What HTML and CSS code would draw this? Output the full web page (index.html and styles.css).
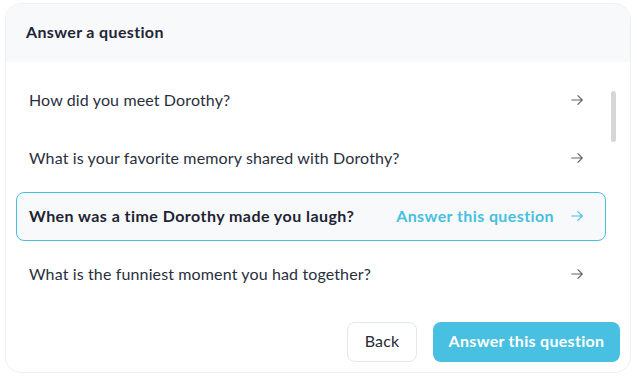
FILE: index.html
```html
<!DOCTYPE html>
<html>
<head>
<meta charset="utf-8">
<link rel="stylesheet" href="styles.css">
</head>
<body>
<div class="card">
  <div class="header">Answer a question</div>
  <div class="content">
    <div class="list">
      <div class="row"><span class="q">How did you meet Dorothy?</span><span class="act"><svg class="arrow" viewBox="0 0 24 24"><path d="M13.5 4.5 21 12l-7.5 7.5M21 12H3"/></svg></span></div>
      <div class="row"><span class="q">What is your favorite memory shared with Dorothy?</span><span class="act"><svg class="arrow" viewBox="0 0 24 24"><path d="M13.5 4.5 21 12l-7.5 7.5M21 12H3"/></svg></span></div>
      <div class="row active"><span class="q">When was a time Dorothy made you laugh?</span><span class="act"><span class="cta">Answer this question</span><svg class="arrow" viewBox="0 0 24 24"><path d="M13.5 4.5 21 12l-7.5 7.5M21 12H3"/></svg></span></div>
      <div class="row"><span class="q">What is the funniest moment you had together?</span><span class="act"><svg class="arrow" viewBox="0 0 24 24"><path d="M13.5 4.5 21 12l-7.5 7.5M21 12H3"/></svg></span></div>
    </div>
    <div class="scrollbar"><div class="thumb"></div></div>
  </div>
  <div class="footer">
    <button class="btn back">Back</button>
    <button class="btn primary">Answer this question</button>
  </div>
</div>
</body>
</html>
```

FILE: styles.css
```css
* { box-sizing: border-box; }
body {
  margin: 0;
  background: #ffffff;
  font-family: "Lato", "Noto Sans", sans-serif;
  color: #252a37;
}
.card {
  margin: 3px 0 0 5px;
  width: 626px;
  height: 370px;
  border: 1px solid #eef0f3;
  border-radius: 16px;
  overflow: hidden;
  display: flex;
  flex-direction: column;
  background: #fff;
}
.header {
  height: 58px;
  flex: none;
  background: #f8f9fb;
  padding: 0 0 4px 20px;
  display: flex;
  align-items: center;
  font-size: 16px;
  font-weight: 700;
  letter-spacing: 0.35px;
  color: #1f2535;
}
.content {
  height: 250px;
  flex: none;
  display: flex;
  overflow: hidden;
}
.list {
  flex: 1;
  padding: 14px 0 0 10px;
  display: flex;
  flex-direction: column;
  gap: 9px;
}
.row {
  flex: none;
  height: 49px;
  display: flex;
  align-items: center;
  justify-content: space-between;
  padding: 0 21px 2px 12px;
  border: 1px solid transparent;
  border-radius: 8px;
  font-size: 16px;
  letter-spacing: 0.13px;
  color: #2a2f3d;
}
.row.active {
  border-color: #48bfe1;
  background: #f7f9fb;
  font-weight: 700;
  letter-spacing: 0.45px;
  color: #1f2433;
}
.act {
  display: flex;
  align-items: center;
  gap: 16px;
}
.cta {
  color: #48bfe1;
  font-weight: 700;
  letter-spacing: 0.4px;
}
.arrow {
  width: 14px;
  height: 14px;
  fill: none;
  stroke: #5f6673;
  stroke-width: 2;
  stroke-linecap: round;
  stroke-linejoin: round;
}
.row.active .arrow { stroke: #48bfe1; }
.scrollbar {
  flex: none;
  width: 24px;
  padding: 29px 0 0 5px;
}
.thumb {
  width: 5px;
  height: 51px;
  border-radius: 3px;
  background: #d6d6d6;
}
.footer {
  flex: 1;
  display: flex;
  justify-content: flex-end;
  align-items: flex-start;
  gap: 16px;
  padding: 10px 10px 0 0;
}
.btn {
  height: 40px;
  border-radius: 8px;
  font-family: inherit;
  font-size: 16px;
  padding: 0 0 3px;
  cursor: pointer;
}
.back {
  width: 70px;
  background: #fff;
  border: 1px solid #e3e7ee;
  color: #252a37;
  letter-spacing: 0.15px;
}
.primary {
  width: 187px;
  background: #48c0e1;
  border: none;
  color: #fff;
  font-weight: 700;
  letter-spacing: 0.3px;
}
```
